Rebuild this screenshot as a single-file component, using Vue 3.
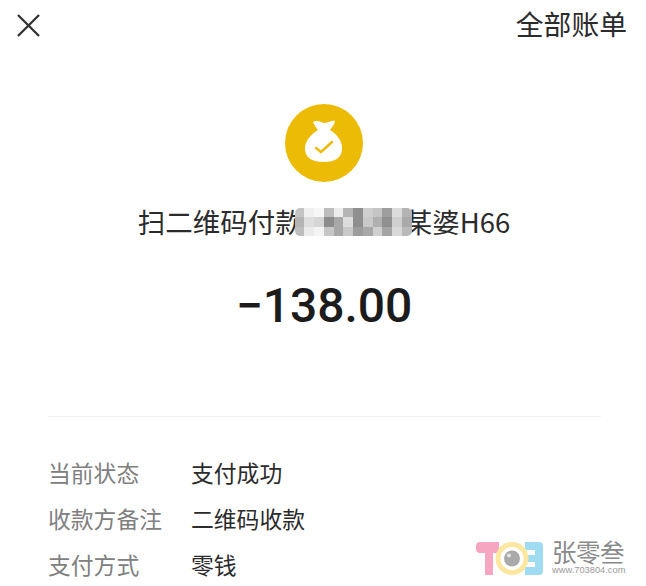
<script setup>
const rows = [
  { label: '当前状态', value: '支付成功' },
  { label: '收款方备注', value: '二维码收款' },
  { label: '支付方式', value: '零钱' }
]

// mosaic greys, read off the blurred part of the title
const mosaic = [
  '#c4c4c4', '#f0f0f0', '#f7f7f7', '#bdbdbd', '#ececec', '#b5b5b5', '#8f8f8f', '#cfcfcf', '#c4c4c4', '#9e9e9e', '#dcdcdc', '#b4b4b4',
  '#b4b4b4', '#dedede', '#d6d6d6', '#8c8c8c', '#a8a8a8', '#dddddd', '#8e8e8e', '#c9c9c9', '#b0b0b0', '#8f8f8f', '#cfcfcf', '#aaaaaa',
  '#bdbdbd', '#ebebeb', '#f4f4f4', '#c6c6c6', '#a8a8a8', '#c9c9c9', '#9c9c9c', '#a8a8a8', '#cfcfcf', '#a4a4a4', '#d8d8d8', '#b9b9b9'
]
</script>

<template>
  <div class="page">
    <header class="topBar">
      <svg class="closeIcon" viewBox="0 0 24 24">
        <path d="M1 1 L23 23 M23 1 L1 23" />
      </svg>
      <span class="allBills">全部账单</span>
    </header>

    <section class="summary">
      <svg class="bagIcon" viewBox="0 0 78 78">
        <circle cx="39" cy="39" r="39" fill="#ecbb05" />
        <path
          fill="#fff"
          d="M28 18 C32 15 37 19 40 19 C43 19 47 16 50 17 C50 20 47 23 45 26 C52 30 58 38 57 46 C56 54 50 58 39 58 C27 58 21 54 20 46 C19 38 26 30 33 26 C31 23 29 21 28 18 Z"
        />
        <path d="M31 44 L36 48 L47 38" fill="none" stroke="#ecbb05" stroke-width="2.4" stroke-linecap="round" stroke-linejoin="round" />
      </svg>

      <div class="title">
        <span>扫二维码付款</span><span class="hiddenPart"></span><span>某婆H66</span>
        <div class="mosaic">
          <i v-for="(grey, i) in mosaic" :key="i" :style="{ background: grey }"></i>
        </div>
      </div>

      <div class="amount">−138.00</div>
    </section>

    <div class="divider"></div>

    <div class="details">
      <div v-for="row in rows" :key="row.label" class="row">
        <span class="label">{{ row.label }}</span>
        <span class="value">{{ row.value }}</span>
      </div>
    </div>

    <div class="watermark">
      <svg class="wmLogo" viewBox="0 0 68 33">
        <path d="M1 4 Q1 0 5 0 H24 V11 H18 V33 H10 V11 H5 Q1 11 1 7 Z" fill="#f6a6c1" />
        <path d="M50 0 H64 Q68 0 68 4 V29 Q68 33 64 33 H50 V25 H60 V20 H52 V13 H60 V8 H50 Z" fill="#9fdcf2" />
        <circle cx="37" cy="16.5" r="16.5" fill="#fbe7a0" />
        <circle cx="37" cy="16.5" r="11.5" fill="#fff" />
        <circle cx="37" cy="16.5" r="8" fill="#a9a9a9" />
        <circle cx="34" cy="13.5" r="2" fill="#e4e4e4" />
      </svg>
      <div class="wmText">
        <span class="wmName">张零叁</span>
        <span class="wmUrl">www.703804.com</span>
      </div>
    </div>
  </div>
</template>

<style scoped>
.page {
  position: relative;
  width: 646px;
  height: 586px;
  overflow: hidden;
  background: #fff;
  color: #222;
  font-family: "Noto Sans CJK SC", "Noto Sans", sans-serif;
}
.topBar {
  display: flex;
  align-items: center;
  justify-content: space-between;
  height: 50px;
  padding: 0 19px 0 17px;
}
.closeIcon {
  width: 23px;
  height: 23px;
  fill: none;
  stroke: #333;
  stroke-width: 2.4;
}
.allBills {
  margin-top: -4px;
  font-size: 27.8px;
  color: #2b2b2b;
}
.summary {
  display: flex;
  flex-direction: column;
  align-items: center;
  padding-top: 54px;
}
.bagIcon {
  width: 78px;
  height: 78px;
  margin-left: 2px;
}
.title {
  position: relative;
  margin-top: 17px;
  margin-left: 2px;
  font-size: 27.5px;
  line-height: 44px;
  white-space: nowrap;
  color: #2b2b2b;
}
.hiddenPart {
  display: inline-block;
  width: 102px;
}
.mosaic {
  position: absolute;
  left: 157px;
  top: 9px;
  width: 117px;
  height: 28px;
  display: grid;
  grid-template-columns: repeat(12, 1fr);
  grid-template-rows: repeat(3, 1fr);
  border-radius: 5px;
  overflow: hidden;
  filter: blur(0.6px);
}
.amount {
  margin-top: 33px;
  margin-left: 2px;
  font-family: Roboto, sans-serif;
  font-size: 48px;
  font-weight: 500;
  line-height: 60px;
  color: #1c1c1c;
}
.divider {
  height: 1px;
  margin: 80px 45px 0 48px;
  background: #f2f2f2;
}
.details {
  padding: 32px 0 0 48px;
}
.row {
  display: flex;
  height: 46px;
  align-items: center;
  font-size: 22.8px;
}
.label {
  width: 143px;
  color: #808080;
}
.value {
  color: #2b2b2b;
}
.watermark {
  position: absolute;
  left: 475px;
  top: 540px;
  display: flex;
  gap: 9px;
}
.wmLogo {
  width: 68px;
  height: 33px;
  margin-top: 2px;
}
.wmText {
  display: flex;
  flex-direction: column;
}
.wmName {
  height: 25px;
  font-size: 24.5px;
  line-height: 24px;
  letter-spacing: -0.5px;
  color: #8a8a8a;
}
.wmUrl {
  font-family: "Liberation Sans", sans-serif;
  font-size: 9.3px;
  line-height: 10px;
  color: #9a9a9a;
}
</style>
